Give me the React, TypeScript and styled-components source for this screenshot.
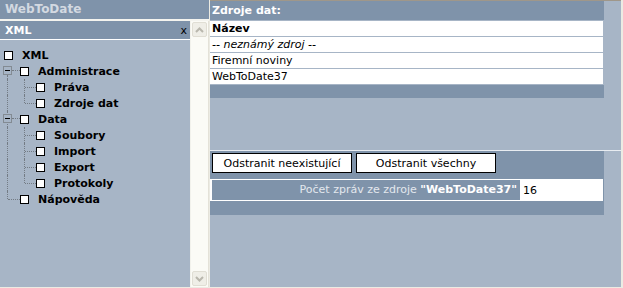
import React from "react";
import styled, { createGlobalStyle } from "styled-components";

const colors = {
  dark: "#7f93aa",
  light: "#a7b5c6",
  frameEdge: "#ecebe3",
  dots: "#737b84",
};

const GlobalStyle = createGlobalStyle`
  html, body { margin: 0; padding: 0; background: ${colors.light}; }
  body { font-family: "DejaVu Sans", Verdana, sans-serif; font-size: 11px; overflow: hidden; }
`;

type Line = "pipe" | "tee" | "ell";

interface TreeItem {
  label: string;
  guides: Line[];
  expander?: { up: boolean };
}

//guides = connector cells before the checkbox, one per level
const treeItems: TreeItem[] = [
  { label: "XML", guides: [] },
  { label: "Administrace", guides: [], expander: { up: false } },
  { label: "Práva", guides: ["pipe", "tee"] },
  { label: "Zdroje dat", guides: ["pipe", "ell"] },
  { label: "Data", guides: [], expander: { up: true } },
  { label: "Soubory", guides: ["pipe", "tee"] },
  { label: "Import", guides: ["pipe", "tee"] },
  { label: "Export", guides: ["pipe", "tee"] },
  { label: "Protokoly", guides: ["pipe", "ell"] },
  { label: "Nápověda", guides: ["ell"] },
];

const sources = ["-- neznámý zdroj --", "Firemní noviny", "WebToDate37"];

const Chevron = ({ up }: { up?: boolean }) => (
  <svg width="9" height="6" viewBox="0 0 9 6">
    <polyline
      points={up ? "1,5 4.5,1.5 8,5" : "1,1 4.5,4.5 8,1"}
      fill="none"
      stroke="#b9b7ad"
      strokeWidth="2"
    />
  </svg>
);

export default function App() {
  return (
    <Page>
      <GlobalStyle />
      <LeftFrame>
        <AppTitle>WebToDate</AppTitle>
        <LeftBody>
          <TreePane>
            <PaneHeader>
              <span>XML</span>
              <Close>x</Close>
            </PaneHeader>
            <Tree>
              {treeItems.map((item) => (
                <TreeRow key={item.label}>
                  {item.expander && (
                    <Expander $up={item.expander.up}>
                      <MinusBox />
                    </Expander>
                  )}
                  {item.guides.map((g, i) => (
                    <Guide key={i} $line={g} $x={i === 0 ? 7 : 8} />
                  ))}
                  <CheckCell>
                    <CheckBox />
                  </CheckCell>
                  <TreeLabel>{item.label}</TreeLabel>
                </TreeRow>
              ))}
            </Tree>
          </TreePane>
          <ScrollBar>
            <ScrollButton>
              <Chevron up />
            </ScrollButton>
            <ScrollButton>
              <Chevron />
            </ScrollButton>
          </ScrollBar>
        </LeftBody>
      </LeftFrame>

      <RightFrame>
        <TopFrame>
          <Grid>
            <GridHeader>Zdroje dat:</GridHeader>
            <GridRow $bold>Název</GridRow>
            {sources.map((s, i) => (
              <GridRow key={s} $italic={i === 0}>
                {s}
              </GridRow>
            ))}
            <GridFooter />
          </Grid>
        </TopFrame>
        <BottomFrame>
          <ActionPanel>
            <Buttons>
              <Button>Odstranit neexistující</Button>
              <Button>Odstranit všechny</Button>
            </Buttons>
            <CountRow>
              <CountLabel>
                Počet zpráv ze zdroje <strong>"WebToDate37"</strong>
              </CountLabel>
              <CountValue>16</CountValue>
            </CountRow>
          </ActionPanel>
        </BottomFrame>
      </RightFrame>
    </Page>
  );
}

const Page = styled.div`
  display: flex;
  width: 623px;
  height: 288px;
  box-sizing: border-box;
  border-right: 2px solid ${colors.frameEdge};
  border-bottom: 1px solid ${colors.frameEdge};
  background: ${colors.light};
`;

const LeftFrame = styled.div`
  width: 209px;
  flex: none;
  display: flex;
  flex-direction: column;
  border-right: 1px solid ${colors.frameEdge};
`;

const AppTitle = styled.div`
  height: 19px;
  line-height: 19px;
  padding-left: 5px;
  background: ${colors.dark};
  color: #d3d9e1;
  font-weight: bold;
  font-size: 12px;
  border-bottom: 2px solid #f4f4ef;
`;

const LeftBody = styled.div`
  flex: 1;
  display: flex;
  min-height: 0;
`;

const TreePane = styled.div`
  width: 191px;
  border-right: 1px solid #f2f2ec;
  background: ${colors.light};
`;

const PaneHeader = styled.div`
  height: 18px;
  display: flex;
  align-items: center;
  justify-content: space-between;
  padding: 0 3px 0 5px;
  background: ${colors.dark};
  color: #fff;
  font-weight: bold;
  font-size: 11px;
  border-bottom: 1px solid #fff;
`;

const Close = styled.span`
  color: #000;
  font-weight: normal;
  font-size: 11px;
`;

const Tree = styled.div`
  padding-top: 7px;
  display: flex;
  flex-direction: column;
`;

const TreeRow = styled.div`
  display: flex;
  align-items: center;
  height: 16px;
`;

const Guide = styled.span<{ $line: Line; $x: number }>`
  position: relative;
  flex: none;
  width: 16px;
  height: 16px;
  &::before {
    content: "";
    position: absolute;
    left: ${(p) => p.$x}px;
    top: 0;
    height: ${(p) => (p.$line === "ell" ? "8px" : "16px")};
    border-left: 1px dotted ${colors.dots};
  }
  &::after {
    content: "";
    display: ${(p) => (p.$line === "pipe" ? "none" : "block")};
    position: absolute;
    left: ${(p) => p.$x + 1}px;
    right: -4px;
    top: 8px;
    border-top: 1px dotted ${colors.dots};
  }
`;

const Expander = styled.span<{ $up: boolean }>`
  position: relative;
  flex: none;
  width: 16px;
  height: 16px;
  &::before {
    content: "";
    position: absolute;
    left: 7px;
    top: ${(p) => (p.$up ? "0" : "12px")};
    bottom: 0;
    border-left: 1px dotted ${colors.dots};
  }
  &::after {
    content: "";
    position: absolute;
    left: 12px;
    right: -4px;
    top: 7px;
    border-top: 1px dotted ${colors.dots};
  }
`;

const MinusBox = styled.span`
  position: absolute;
  left: 3px;
  top: 3px;
  width: 7px;
  height: 7px;
  border: 1px solid #838b93;
  background: ${colors.light};
  z-index: 1;
  &::after {
    content: "";
    position: absolute;
    left: 1px;
    top: 3px;
    width: 5px;
    height: 1px;
    background: #000;
  }
`;

const CheckCell = styled.span`
  flex: none;
  width: 16px;
  height: 16px;
  display: flex;
  align-items: center;
`;

const CheckBox = styled.span`
  margin-left: 4px;
  width: 7px;
  height: 7px;
  background: #fff;
  border: 1px solid #000;
`;

const TreeLabel = styled.span`
  margin-left: 6px;
  font-weight: bold;
  font-size: 11px;
  color: #000;
  white-space: nowrap;
`;

const ScrollBar = styled.div`
  width: 15px;
  padding: 1px;
  display: flex;
  flex-direction: column;
  justify-content: space-between;
  background: #fbfbf6;
  border-right: 1px solid #e4e2d8;
`;

const ScrollButton = styled.div`
  height: 15px;
  display: flex;
  align-items: center;
  justify-content: center;
  box-sizing: border-box;
  background: #efeee7;
  border: 1px solid #e0ded4;
  border-radius: 2px;
`;

const RightFrame = styled.div`
  flex: 1;
  display: flex;
  flex-direction: column;
`;

const TopFrame = styled.div`
  height: 150px;
  border-top: 1px solid #9f978a;
  box-sizing: border-box;
`;

const Grid = styled.div`
  width: 394px;
  display: flex;
  flex-direction: column;
  gap: 1px;
`;

const GridHeader = styled.div`
  height: 19px;
  line-height: 19px;
  padding-left: 2px;
  background: ${colors.dark};
  color: #fff;
  font-weight: bold;
`;

const GridRow = styled.div<{ $bold?: boolean; $italic?: boolean }>`
  width: 391px;
  height: 15px;
  line-height: 15px;
  padding-left: 2px;
  background: #fff;
  color: #000;
  font-weight: ${(p) => (p.$bold ? "bold" : "normal")};
  font-style: ${(p) => (p.$italic ? "italic" : "normal")};
`;

const GridFooter = styled.div`
  height: 13px;
  background: ${colors.dark};
`;

const BottomFrame = styled.div`
  flex: 1;
  border-top: 1px solid #e8ecf1;
`;

const ActionPanel = styled.div`
  width: 394px;
  padding: 2px 0 14px;
  background: ${colors.dark};
`;

const Buttons = styled.div`
  display: flex;
  gap: 4px;
  margin-left: 2px;
`;

const Button = styled.button`
  width: 140px;
  height: 20px;
  padding: 0;
  background: #fff;
  border: 1px solid #000;
  font-family: inherit;
  font-size: 11px;
  color: #000;
`;

const CountRow = styled.div`
  width: 391px;
  margin-top: 6px;
  padding: 1px 0 1px 2px;
  display: flex;
  align-items: center;
  background: #fff;
`;

const CountLabel = styled.div`
  width: 305px;
  height: 20px;
  line-height: 20px;
  padding-right: 3px;
  text-align: right;
  background: ${colors.dark};
  color: #e3e8ee;
  white-space: nowrap;
  strong {
    color: #fff;
  }
`;

const CountValue = styled.span`
  margin-left: 3px;
  color: #000;
`;
